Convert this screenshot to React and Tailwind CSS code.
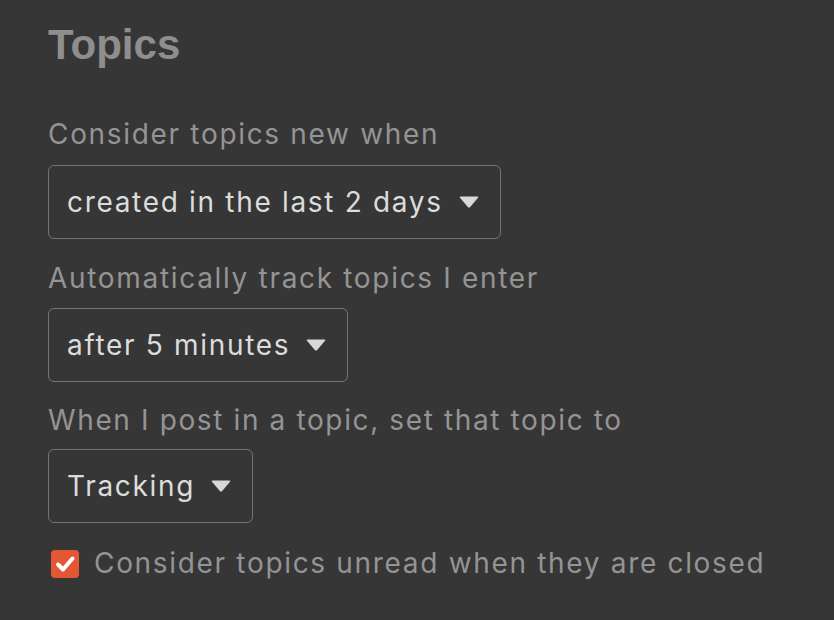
import React from "react";

function Caret() {
  return (
    <svg width="20" height="12" viewBox="0 0 20 12" className="shrink-0">
      <path d="M1.5 0.5 H18.5 Q20 0.5 19 1.7 L11.2 10.9 Q10 12.2 8.8 10.9 L1 1.7 Q0 0.5 1.5 0.5 Z" fill="#d8d8d8" />
    </svg>
  );
}

function Select({ label }) {
  return (
    <div className="inline-flex h-[74px] items-center gap-[16px] self-start rounded-[6px] border border-[#747474] pl-[18px] pr-[21px]">
      <span className="text-[28px] leading-none tracking-[0.06em] text-[#dcdcdc]">{label}</span>
      <Caret />
    </div>
  );
}

export default function App() {
  return (
    <div
      className="flex min-h-screen flex-col bg-[#363636] pl-[48px] pt-[20px]"
      style={{ fontFamily: "Inter, 'Noto Sans', sans-serif" }}
    >
      <h2
        className="text-[42px] font-bold leading-[1.2] text-[#8e8e8e]"
        style={{ fontFamily: "'Liberation Sans', Arial, sans-serif" }}
      >
        Topics
      </h2>

      <label className="mt-[45px] mb-[10px] text-[28px] leading-[1.4] tracking-[0.06em] text-[#949494]">
        Consider topics new when
      </label>
      <Select label="created in the last 2 days" />

      <label className="mt-[20px] mb-[10px] text-[28px] leading-[1.4] tracking-[0.06em] text-[#949494]">
        Automatically track topics I enter
      </label>
      <Select label="after 5 minutes" />

      <label className="mt-[19px] mb-[9px] text-[28px] leading-[1.4] tracking-[0.058em] text-[#949494]">
        When I post in a topic, set that topic to
      </label>
      <Select label="Tracking" />

      <div className="mt-[21px] flex items-center gap-[15px] pl-[3px]">
        <div className="flex h-[28px] w-[28px] items-center justify-center rounded-[4px] bg-[#e45735]">
          <svg width="28" height="28" viewBox="0 0 28 28">
            <path d="M7 14.5 L12 19.5 L21.5 8.5" fill="none" stroke="#ffffff" strokeWidth="4" strokeLinecap="round" strokeLinejoin="round" />
          </svg>
        </div>
        <span className="text-[28px] leading-[1.4] tracking-[0.06em] text-[#949494]">
          Consider topics unread when they are closed
        </span>
      </div>
    </div>
  );
}
